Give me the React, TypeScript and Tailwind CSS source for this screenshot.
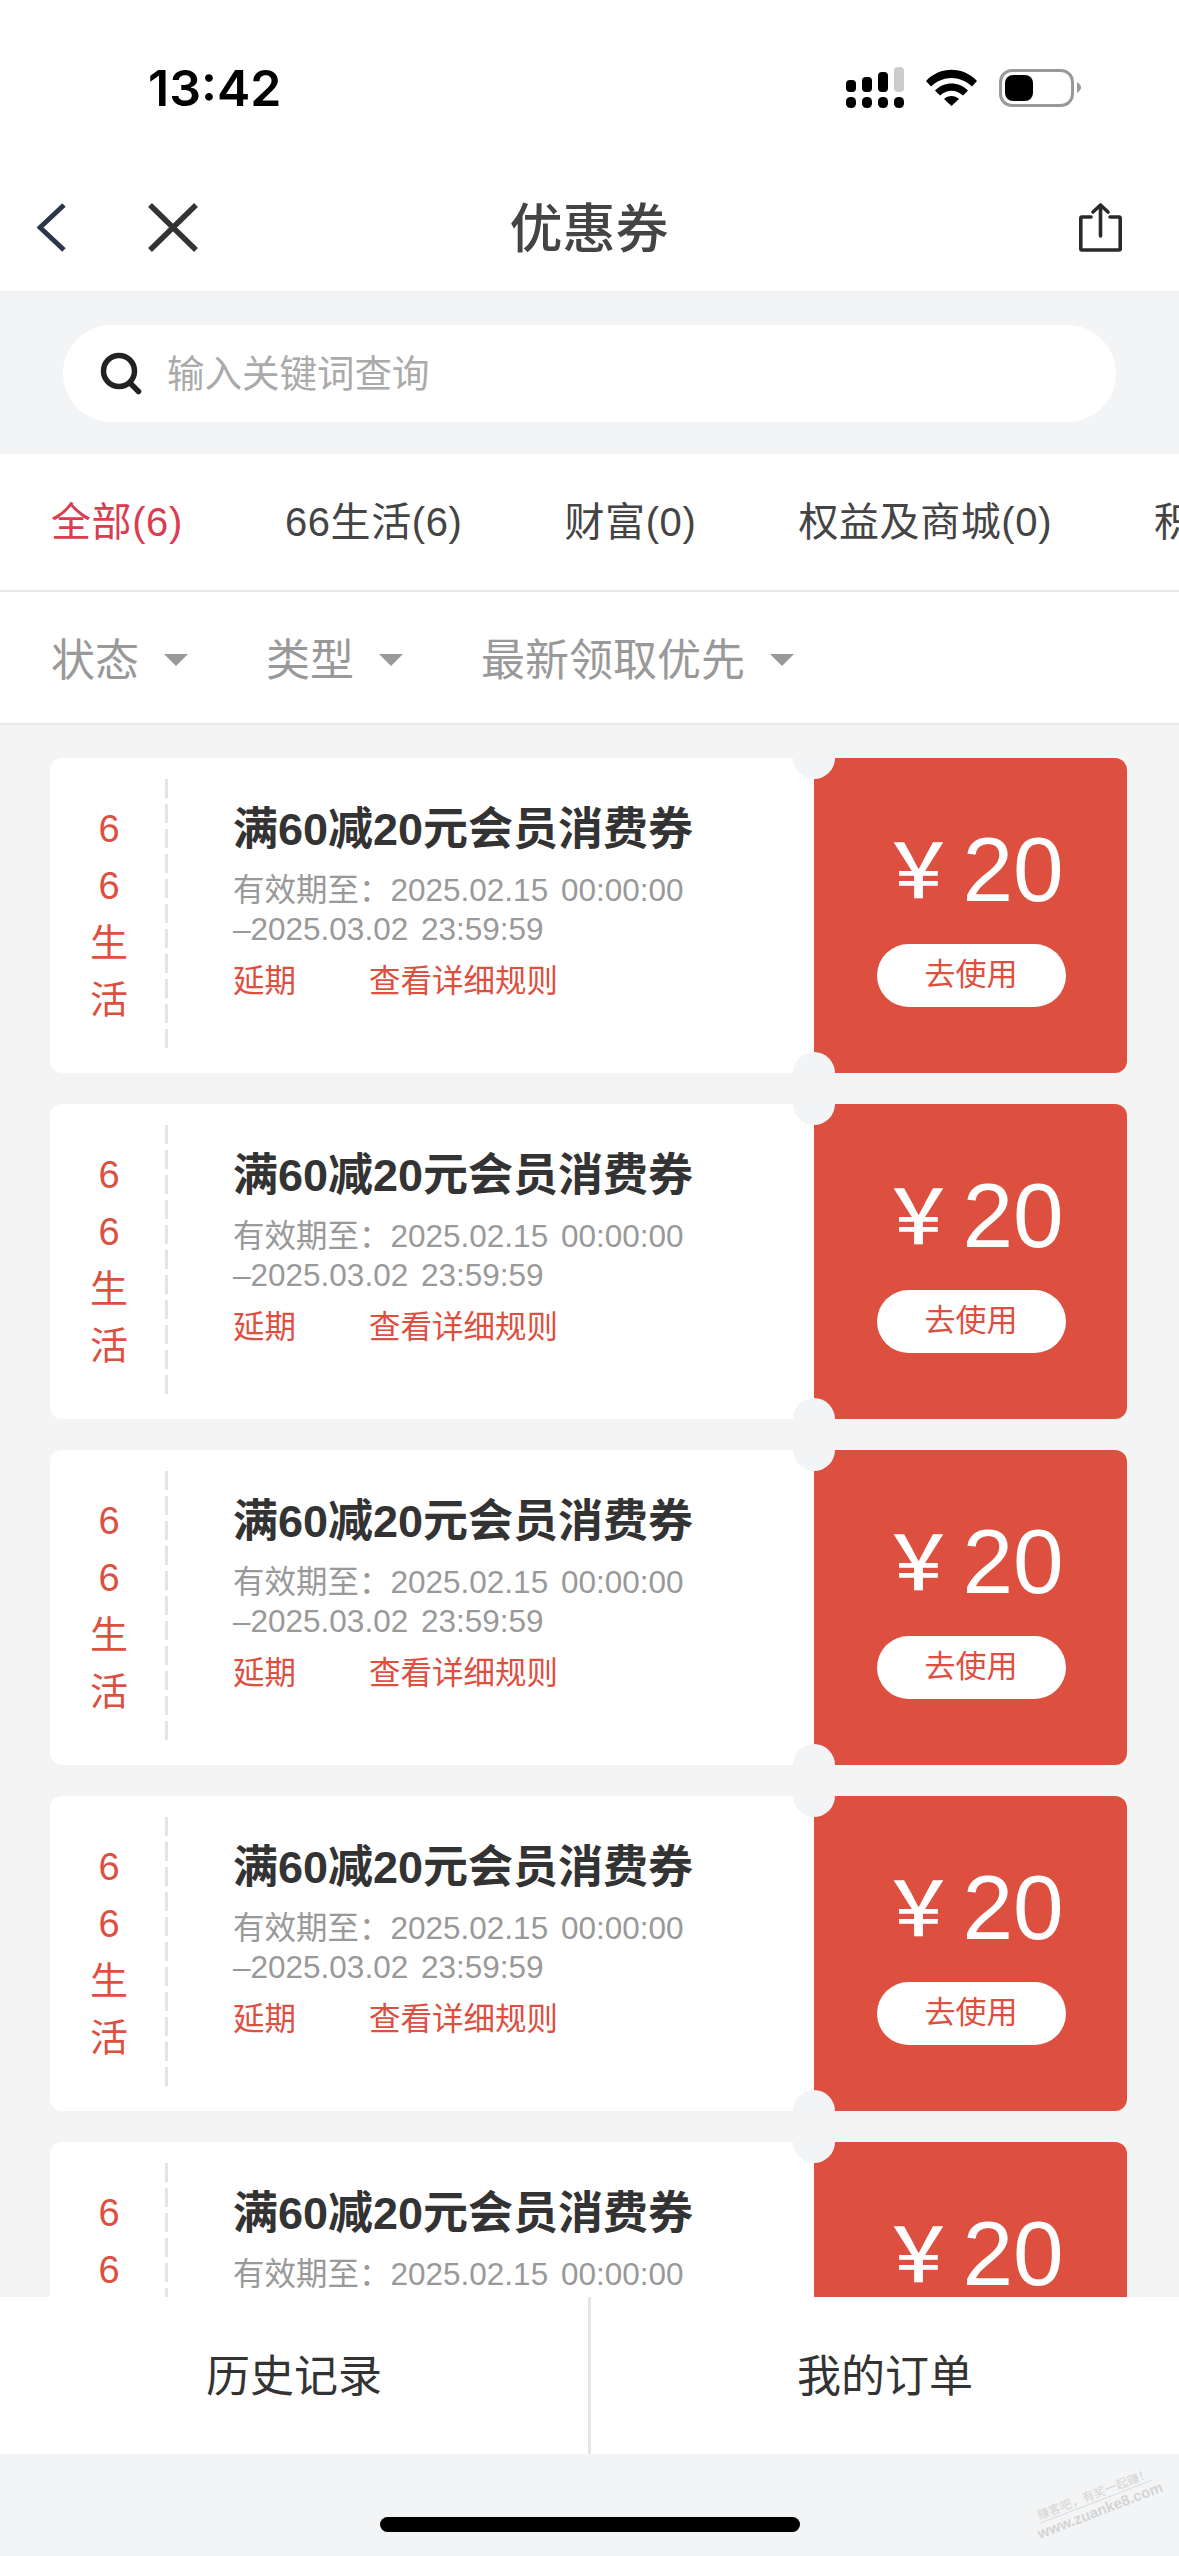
const CJK = "font-['Inter','Noto_Sans_CJK_SC',sans-serif]";
const LATIN = "font-['Liberation_Sans','Noto_Sans_CJK_SC',sans-serif]";

const tabs = ["全部(6)", "66生活(6)", "财富(0)", "权益及商城(0)", "积分(0)"];
const filters = ["状态", "类型", "最新领取优先"];

function StatusIcons() {
  return (
    <div className="flex items-center">
      <svg width="58" height="41" viewBox="0 0 58 41" className="mr-[22px]">
        <rect x="0" y="13" width="10" height="12" rx="4" fill="#000" />
        <rect x="16" y="10" width="10" height="15" rx="4" fill="#000" />
        <rect x="32" y="5" width="10" height="20" rx="4" fill="#000" />
        <rect x="48" y="0" width="10" height="25" rx="4" fill="#ccc" />
        <rect x="0" y="30" width="10" height="11" rx="4.5" fill="#000" />
        <rect x="16" y="30" width="10" height="11" rx="4.5" fill="#000" />
        <rect x="32" y="30" width="10" height="11" rx="4.5" fill="#000" />
        <rect x="48" y="30" width="10" height="11" rx="4.5" fill="#000" />
      </svg>
      <svg width="51" height="37" viewBox="0 0 51 37" className="mr-[22px]">
        <path d="M0 12 C14 -3 37 -3 51 12 L46 17.5 C34 6 17 6 5 17.5Z" fill="#000" />
        <path d="M9 21.5 C18 12 33 12 42 21.5 L37 26.5 C30 20 21 20 14 26.5Z" fill="#000" />
        <path d="M18 30 C22 26 29 26 33 30 L25.5 37Z" fill="#000" />
      </svg>
      <div className="flex items-center">
        <div className="h-[38px] w-[75px] rounded-[13px] border-[3px] border-[#999] p-[3px]">
          <div className="h-full w-[28px] rounded-[8px] bg-black" />
        </div>
        <svg width="4" height="11" viewBox="0 0 4 11" className="ml-[3px]">
          <path d="M0 0 C3 2 4 4 4 5.5 C4 7 3 9 0 11Z" fill="#999" />
        </svg>
      </div>
    </div>
  );
}

function Coupon() {
  return (
    <div className="relative flex h-[315px] shrink-0 overflow-hidden rounded-[12px]">
      <div className="flex w-[764px] bg-white">
        <div className={`flex w-[115px] flex-col items-center pl-[3px] pt-[43px] text-[38px] leading-[57px] text-[#dd4f3f] ${LATIN}`}>
          <span>6</span>
          <span>6</span>
          <span>生</span>
          <span>活</span>
        </div>
        <div className="my-[21px] w-[3px] bg-[repeating-linear-gradient(to_bottom,#e4e4e4_0,#e4e4e4_19px,transparent_19px,transparent_25px)]" />
        <div className="pl-[65px] pt-[37px]">
          <div className={`text-[45px] font-bold leading-[70px] text-[#333] ${LATIN}`}>满60减20元会员消费券</div>
          <div className={`mt-[6px] text-[31.5px] leading-[39px] text-[#999] [word-spacing:4px] ${LATIN}`}>
            <div>有效期至：2025.02.15 00:00:00</div>
            <div>–2025.03.02 23:59:59</div>
          </div>
          <div className={`mt-[12px] flex gap-[73px] text-[31.5px] leading-[40px] text-[#dd4f3f] ${LATIN}`}>
            <span>延期</span>
            <span>查看详细规则</span>
          </div>
        </div>
      </div>
      <div className="flex flex-1 flex-col items-center bg-[#dd4f3f]">
        <div className={`ml-[3px] mt-[62px] flex h-[98px] items-center text-white ${LATIN}`}>
          <span className="pt-[6px] text-[76px] font-medium leading-none">￥</span>
          <span className="ml-[6px] text-[91px] leading-none">20</span>
        </div>
        <div className={`ml-[1px] mt-[26px] flex h-[63px] w-[189px] items-center justify-center rounded-full bg-white text-[31px] text-[#dd4f3f] ${LATIN}`}>
          去使用
        </div>
      </div>
      {/* ticket notches on the perforation */}
      <div className="absolute -top-[21px] left-[743px] size-[42px] rounded-full bg-[#f3f4f6]" />
      <div className="absolute -bottom-[21px] left-[743px] size-[42px] rounded-full bg-[#f3f4f6]" />
    </div>
  );
}

export default function App() {
  return (
    <div className={`relative flex h-[2556px] w-[1179px] flex-col overflow-hidden bg-[#f3f4f6] ${CJK}`}>
      {/* status bar */}
      <div className="flex h-[172px] shrink-0 items-start justify-between bg-white pl-[148px] pr-[98px] pt-[57px]">
        <span className="text-[50px] font-semibold leading-[62px] text-black">13:42</span>
        <div className="pt-[10px]">
          <StatusIcons />
        </div>
      </div>

      {/* nav bar */}
      <div className="grid h-[121px] shrink-0 grid-cols-[1fr_auto_1fr] items-center border-b-2 border-[#eeeff1] bg-white pb-[8px] pl-[37px] pr-[57px]">
        <div className="flex items-center">
          <svg width="29" height="49" viewBox="0 0 29 49" fill="none">
            <path d="M27 2 L3 24.5 L27 47" stroke="#2c3648" strokeWidth="5" />
          </svg>
          <svg width="50" height="49" viewBox="0 0 50 49" fill="none" className="ml-[82px]">
            <path d="M2 2 L48 47 M48 2 L2 47" stroke="#333" strokeWidth="5.5" />
          </svg>
        </div>
        <div className="pl-[19px] pt-[3px] text-[53px] font-medium leading-none text-[#444]">优惠券</div>
        <div className="flex justify-end">
          <svg width="43" height="49" viewBox="0 0 43 49" fill="none" stroke="#2a2a2a" strokeWidth="3.6" strokeLinecap="round" strokeLinejoin="round">
            <path d="M12 14 H3 Q1.8 14 1.8 15.5 V45.5 Q1.8 47 3 47 H40 Q41.2 47 41.2 45.5 V15.5 Q41.2 14 40 14 H31" />
            <path d="M21.5 33 V2 M14 9 L21.5 2 L29 9" />
          </svg>
        </div>
      </div>

      {/* search */}
      <div className="shrink-0 px-[63px] py-[32px]">
        <div className="flex h-[97px] items-center rounded-full bg-white pl-[37px]">
          <svg width="42" height="43" viewBox="0 0 42 43" fill="none" stroke="#222" strokeWidth="5.5" strokeLinecap="round">
            <circle cx="19" cy="19" r="15.5" />
            <path d="M30 31 L38.5 39.5" />
          </svg>
          <span className="ml-[25px] pt-[2px] text-[37.5px] text-[#aaa]">输入关键词查询</span>
        </div>
      </div>

      {/* category tabs */}
      <div className={`flex h-[138px] shrink-0 items-center gap-[102px] overflow-hidden whitespace-nowrap border-b-2 border-[#e8e8e8] bg-white pl-[51px] text-[40px] tracking-[0.6px] text-[#444] ${LATIN}`}>
        {tabs.map((t, i) => (
          <span key={t} className={i === 0 ? "text-[#dc3c4f]" : ""}>
            {t}
          </span>
        ))}
      </div>

      {/* filters */}
      <div className="flex h-[133px] shrink-0 items-center gap-[78px] border-b-2 border-[#e8e8e8] bg-white pl-[51px] text-[44px] text-[#999]">
        {filters.map((f) => (
          <div key={f} className="flex items-center gap-[25px] pt-[5px]">
            <span>{f}</span>
            <svg width="24" height="12" viewBox="0 0 24 12">
              <path d="M0 0 H24 L12 12Z" fill="#999" />
            </svg>
          </div>
        ))}
      </div>

      {/* coupon list */}
      <div className="flex min-h-0 flex-1 flex-col gap-[31px] overflow-hidden bg-[#f4f4f4] pl-[50px] pr-[52px] pt-[33px]">
        {[0, 1, 2, 3, 4].map((i) => (
          <Coupon key={i} />
        ))}
      </div>

      {/* bottom actions */}
      <div className="flex h-[157px] shrink-0 bg-white text-[44px] text-[#333]">
        <div className="flex flex-1 items-center justify-center">历史记录</div>
        <div className="w-[3px] bg-[#e5e5e5]" />
        <div className="flex flex-1 items-center justify-center">我的订单</div>
      </div>

      {/* home indicator */}
      <div className="flex h-[102px] shrink-0 justify-center pt-[63px]">
        <div className="h-[15px] w-[420px] rounded-full bg-black" />
      </div>

      {/* forum watermark */}
      <div className="absolute left-[1032px] top-[2486px] flex w-[130px] -rotate-[21deg] flex-col items-center text-[#d4d4d4]">
        <span className="whitespace-nowrap border-b border-[#dcdcdc] text-[12px] leading-[15px]">赚客吧，有奖一起赚！</span>
        <span className={`whitespace-nowrap text-[15px] font-bold leading-[17px] ${LATIN}`}>www.zuanke8.com</span>
      </div>
    </div>
  );
}
